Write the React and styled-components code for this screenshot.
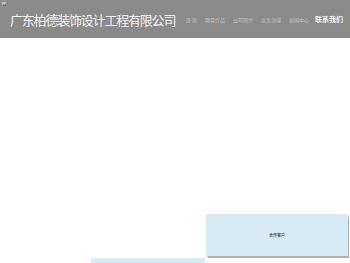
import styled, { createGlobalStyle } from "styled-components";

const Global = createGlobalStyle`
  html, body {
    margin: 0;
    padding: 0;
    background: #ffffff;
    font-family: "Noto Sans CJK SC", "Noto Sans", sans-serif;
  }
`;

const Page = styled.div`
  width: 350px;
  height: 263px;
  overflow: hidden;
  display: flex;
  flex-direction: column;
`;

const Header = styled.header`
  height: 38px;
  background: #8a8a8a;
  display: flex;
  align-items: center;
  flex-shrink: 0;
`;

const Broken = styled.svg`
  align-self: flex-start;
  margin: 1px 0 0 1px;
  flex-shrink: 0;
`;

const Title = styled.h1`
  margin: 0 0 0 3px;
  font-size: 13px;
  font-weight: normal;
  letter-spacing: -1.2px;
  color: #f4f4f4;
  white-space: nowrap;
  line-height: 1;
`;

const Nav = styled.nav`
  margin-left: auto;
  margin-right: 7px;
  display: flex;
  align-items: center;
  gap: 8px;
`;

const NavItem = styled.a`
  font-size: ${(p) => (p.$strong ? "7px" : "5px")};
  font-weight: ${(p) => (p.$strong ? "bold" : "normal")};
  color: ${(p) => (p.$strong ? "#f6f6f6" : "#c9c9c9")};
  white-space: pre;
  line-height: 1;
  margin-left: ${(p) => (p.$strong ? "-2px" : "0")};
`;

const Main = styled.main`
  flex: 1;
  display: flex;
  flex-direction: column;
  padding-top: 176px;
`;

const CardRow = styled.div`
  display: flex;
  justify-content: flex-end;
  padding-right: 2px;
`;

const Card = styled.div`
  width: 142px;
  height: 42px;
  background: #d7ebf5;
  box-shadow: 0 1px 1px 0.5px rgba(0, 0, 0, 0.3);
  display: flex;
  align-items: center;
  justify-content: center;
  font-size: 4px;
  font-weight: bold;
  color: #555;
`;

const BarRow = styled.div`
  display: flex;
  padding: 2px 0 0 91px;
`;

const Bar = styled.div`
  width: 114px;
  height: 8px;
  background: #d7ebf5;
`;

const navItems = ["首 页", "项目作品", "公司简介", "业务领域", "新闻中心"];

export default function App() {
  return (
    <Page>
      <Global />
      <Header>
        <Broken width="6" height="6" viewBox="0 0 6 6">
          <rect x="0.5" y="0.5" width="5" height="5" fill="#b8c4b0" stroke="#7f8c7a" strokeWidth="0.6" />
          <path d="M1 5 L2.5 3 L3.5 4 L5 2.5 L5 5 Z" fill="#3f8a3a" />
        </Broken>
        <Title>广东柏德装饰设计工程有限公司</Title>
        <Nav>
          {navItems.map((t) => (
            <NavItem key={t}>{t}</NavItem>
          ))}
          <NavItem $strong>联系我们</NavItem>
        </Nav>
      </Header>
      <Main>
        <CardRow>
          <Card>合作客户</Card>
        </CardRow>
        <BarRow>
          <Bar />
        </BarRow>
      </Main>
    </Page>
  );
}
